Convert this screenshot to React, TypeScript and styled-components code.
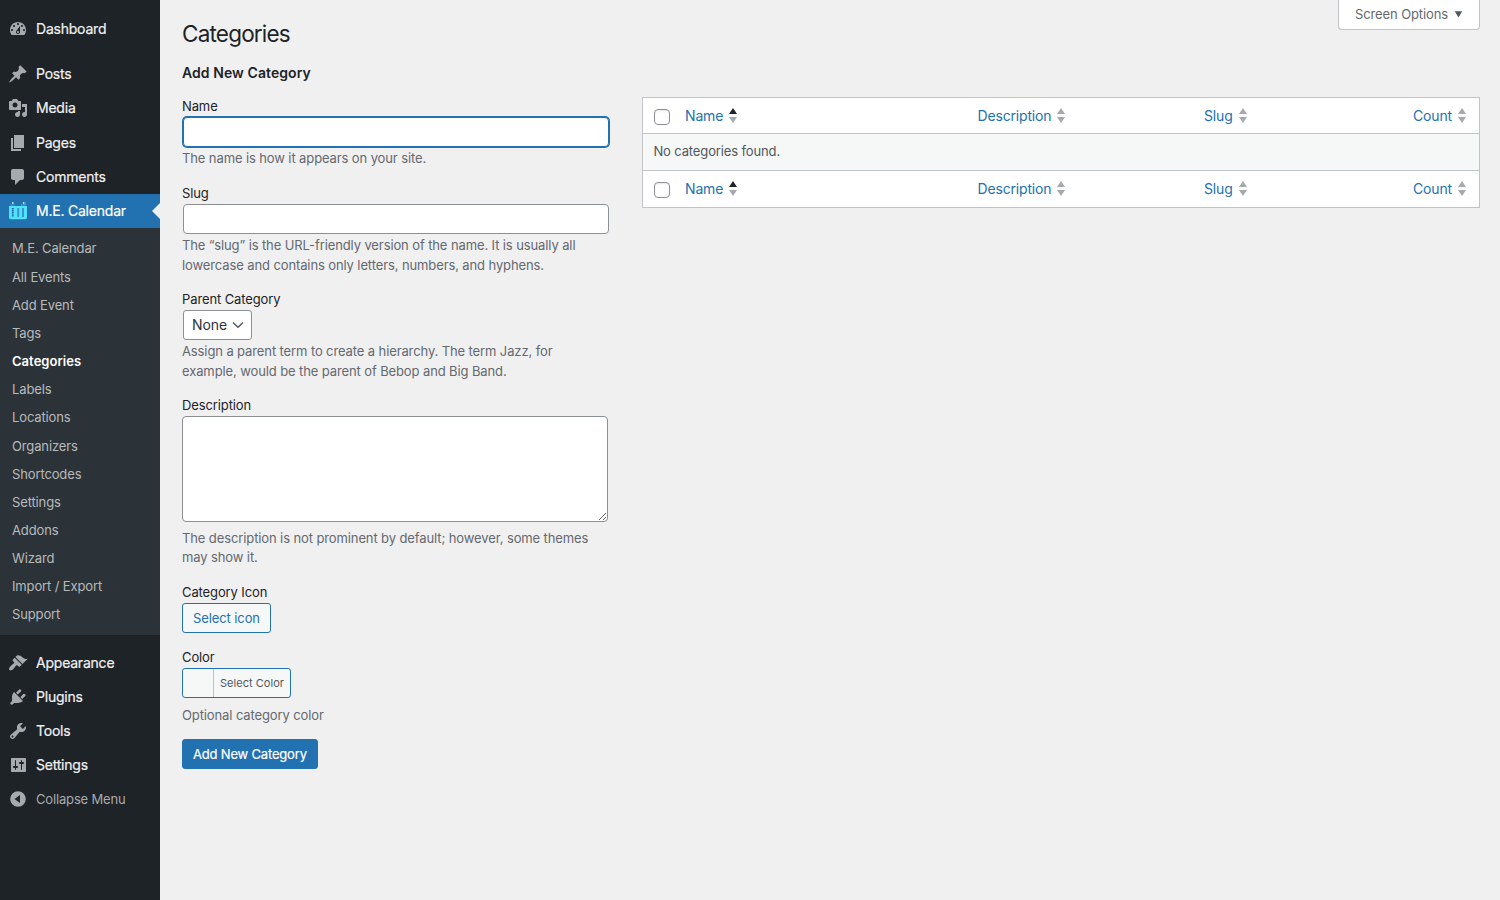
import React from "react";
import styled, { createGlobalStyle, css } from "styled-components";

const GlobalStyle = createGlobalStyle`
  * { box-sizing: border-box; }
  html, body { margin: 0; background: #f0f0f0; }
  body {
    font-family: Inter, "Liberation Sans", sans-serif;
    font-size: 13px;
    line-height: 19.5px;
    letter-spacing: -0.11px;
    color: #1d2327;
    overflow: hidden;
  }
  input, textarea, button, select { font-family: inherit; letter-spacing: inherit; margin: 0; outline: none; }
`;

const Page = styled.div`
  display: flex;
  width: 1500px;
  height: 900px;
`;

/* Sidebar */

const Sidebar = styled.nav`
  width: 160px;
  flex: none;
  background: #1d2327;
  padding-top: 12px;
`;

const MenuList = styled.ul<{ $gap?: number }>`
  list-style: none;
  margin: ${(p) => p.$gap ?? 0}px 0 0;
  padding: 0;
`;

const MenuRow = styled.li<{ $active?: boolean; $muted?: boolean }>`
  display: flex;
  align-items: center;
  height: 34.2px;
  padding-left: 8px;
  gap: 8px;
  font-size: 14px;
  line-height: 18px;
  letter-spacing: -0.22px;
  white-space: nowrap;
  color: #f0f0f1;
  -webkit-text-stroke: 0.2px currentColor;
  ${(p) =>
    p.$muted &&
    css`
      height: 34px;
      font-size: 13px;
      line-height: 19px;
      letter-spacing: -0.16px;
      color: #a7aaad;
      -webkit-text-stroke: 0;
    `}
  ${(p) =>
    p.$active &&
    css`
      background: #2271b1;
      color: #fff;
      &::after {
        content: "";
        margin-left: auto;
        border: 8px solid transparent;
        border-left-width: 0;
        border-right-color: #f0f0f0;
      }
    `}
`;

const MenuIcon = styled.svg`
  width: 20px;
  height: 20px;
  flex: none;
  fill: #a7aaad;
`;

const SubMenu = styled.ul`
  list-style: none;
  margin: 0;
  padding: 6.3px 0 6.3px;
  background: #2c3338;
`;

const SubItem = styled.li<{ $current?: boolean }>`
  height: 28.17px;
  line-height: 28.17px;
  padding-left: 12px;
  letter-spacing: ${(p) => (p.$current ? 0.04 : -0.13)}px;
  color: ${(p) => (p.$current ? "#fff" : "#b7babd")};
  font-weight: ${(p) => (p.$current ? 600 : 400)};
`;

/* Main area */

const Main = styled.main`
  flex: 1;
  display: flex;
  flex-direction: column;
  padding: 0 20px 0 22px;
`;

const TopBar = styled.header`
  display: flex;
  justify-content: space-between;
  align-items: flex-start;
  height: 63px;
`;

const Title = styled.h1`
  margin: 19px 0 0;
  font-size: 22.5px;
  line-height: 30px;
  font-weight: 400;
  letter-spacing: -0.8px;
`;

const ScreenOptions = styled.button`
  display: flex;
  align-items: center;
  gap: 6px;
  width: 142px;
  height: 30px;
  padding: 0 16px 1px;
  border: 1px solid #c3c4c7;
  border-top: 0;
  border-radius: 0 0 4px 4px;
  background: #fff;
  color: #646970;
  font-size: 13px;
  white-space: nowrap;
`;

const Columns = styled.div`
  display: flex;
  gap: 32px;
  align-items: flex-start;
`;

const FormColumn = styled.form`
  width: 428px;
  flex: none;
`;

const FormHeading = styled.h2`
  margin: 0 0 13.5px;
  font-size: 14px;
  line-height: 20px;
  font-weight: 600;
  letter-spacing: 0.07px;
`;

const Field = styled.div<{ $height: number }>`
  display: flex;
  flex-direction: column;
  align-items: flex-start;
  height: ${(p) => p.$height}px;
`;

const Label = styled.label`
  height: 20px;
  line-height: 18px;
`;

const Help = styled.p<{ $top?: number }>`
  margin: ${(p) => p.$top ?? 1}px 0 0;
  color: #646970;
  white-space: pre-line;
`;

const TextInput = styled.input<{ $focused?: boolean }>`
  width: 426px;
  height: 30px;
  margin: 0.5px 1px 0.5px;
  padding: 0 8px;
  border: 1px solid ${(p) => (p.$focused ? "#2271b1" : "#8c8f94")};
  border-radius: 4px;
  background: #fff;
  box-shadow: ${(p) => (p.$focused ? "0 0 0 1px #2271b1" : "none")};
`;

const SelectBox = styled.div`
  display: flex;
  align-items: center;
  justify-content: space-between;
  width: 69px;
  height: 30px;
  margin: 0.5px 1px;
  padding: 0 7px 0 8px;
  border: 1px solid #8c8f94;
  border-radius: 3px;
  background: #fff;
  color: #2c3338;
  font-size: 14px;
`;

const TextArea = styled.textarea`
  display: block;
  width: 426px;
  height: 106px;
  border: 1px solid #8c8f94;
  border-radius: 4px;
  background: #fff;
  resize: vertical;
`;

const Button = styled.button<{ $primary?: boolean }>`
  height: 30px;
  padding: 0 10px;
  border: 1px solid #2271b1;
  border-radius: 3px;
  background: ${(p) => (p.$primary ? "#2271b1" : "#f6f7f7")};
  color: ${(p) => (p.$primary ? "#fff" : "#2271b1")};
  font-size: 13px;
  letter-spacing: ${(p) => (p.$primary ? -0.18 : -0.1)}px;
  white-space: nowrap;
  -webkit-text-stroke: ${(p) => (p.$primary ? "0.2px #fff" : "0")};
`;

const ColorButton = styled.button`
  display: flex;
  width: 109px;
  height: 30px;
  padding: 0;
  border: 1px solid #2271b1;
  border-radius: 3px;
  background: #f6f7f7;
  overflow: hidden;
`;

const Swatch = styled.span`
  width: 30px;
  height: 28px;
  flex: none;
`;

const ColorText = styled.span`
  flex: 1;
  border-left: 1px solid #c3c4c7;
  color: #50575e;
  font-size: 11px;
  letter-spacing: 0.03px;
  line-height: 28px;
  text-align: center;
  white-space: nowrap;
`;

const Table = styled.section`
  flex: 1;
  margin-top: 34px;
  border: 1px solid #c3c4c7;
  background: #fff;
`;

const HeadRow = styled.div<{ $foot?: boolean }>`
  display: grid;
  grid-template-columns: 32px 292.5px 226.5px 209px 1fr;
  align-items: center;
  height: ${(p) => (p.$foot ? 36 : 35)}px;
  padding-left: 10px;
`;

const EmptyRow = styled.div`
  height: 38px;
  line-height: 35px;
  padding-left: 10.4px;
  border: 1px solid #c3c4c7;
  border-width: 1px 0;
  background: #f6f7f7;
  color: #50575e;
  letter-spacing: -0.13px;
`;

const Checkbox = styled.span<{ $foot?: boolean }>`
  display: block;
  width: 16px;
  height: 16px;
  margin: ${(p) => (p.$foot ? 2 : 3)}px 0 0 1px;
  border: 1px solid #8c8f94;
  border-radius: 4px;
  background: #fff;
  box-shadow: inset 0 1px 2px rgba(0, 0, 0, 0.1);
`;

const SortLink = styled.a`
  display: flex;
  align-items: center;
  gap: 6px;
  color: #2271b1;
  font-size: 14px;
  letter-spacing: -0.17px;
`;

const SortIcon = styled.svg<{ $foot?: boolean }>`
  margin-bottom: ${(p) => (p.$foot ? 2 : 0)}px;
`;

const ICONS = {
  dashboard:
    "M3.76 16h12.48c1.1-1.37 1.76-3.11 1.76-5 0-4.42-3.58-8-8-8s-8 3.58-8 8c0 1.89.66 3.63 1.76 5zM10 4c.55 0 1 .45 1 1s-.45 1-1 1-1-.45-1-1 .45-1 1-1zM6 6c.55 0 1 .45 1 1s-.45 1-1 1-1-.45-1-1 .45-1 1-1zm8 0c.55 0 1 .45 1 1s-.45 1-1 1-1-.45-1-1 .45-1 1-1zm-5.37 5.55L12 7v6c0 1.1-.9 2-2 2s-2-.9-2-2c0-.57.24-1.08.63-1.45zM4 10c.55 0 1 .45 1 1s-.45 1-1 1-1-.45-1-1 .45-1 1-1zm12 0c.55 0 1 .45 1 1s-.45 1-1 1-1-.45-1-1 .45-1 1-1zm-5 3c0-.55-.45-1-1-1s-1 .45-1 1 .45 1 1 1 1-.45 1-1z",
  posts:
    "M10.44 3.02l1.82-1.82 6.36 6.35-1.83 1.82c-1.05-.68-2.48-.57-3.41.36l-.75.75c-.92.93-1.04 2.35-.35 3.41l-1.83 1.82-2.41-2.41-2.8 2.79c-.42.42-3.38 2.71-3.8 2.29s1.86-3.39 2.28-3.81l2.79-2.79L4.1 9.36l1.83-1.82c1.05.69 2.48.57 3.4-.36l.75-.75c.93-.92 1.05-2.35.36-3.41z",
  media:
    "M13 11V4c0-.55-.45-1-1-1h-1.67L9 1H5L3.67 3H2c-.55 0-1 .45-1 1v7c0 .55.45 1 1 1h10c.55 0 1-.45 1-1zM7 4.5c1.38 0 2.5 1.12 2.5 2.5S8.38 9.5 7 9.5 4.5 8.38 4.5 7 5.62 4.5 7 4.5zM14 6h5v10.5c0 1.38-1.12 2.5-2.5 2.5S14 17.88 14 16.5s1.12-2.5 2.5-2.5c.17 0 .34.02.5.05V9h-3V6zm-4 8.05V13h2v3.5c0 1.38-1.12 2.5-2.5 2.5S7 17.88 7 16.5 8.12 14 9.5 14c.17 0 .34.02.5.05z",
  pages: "M6 15V2h10v13H6zm-1 1h8v2H3V5h2v11z",
  comments:
    "M5 2h9c1.1 0 2 .9 2 2v7c0 1.1-.9 2-2 2h-2l-5 5v-5H5c-1.1 0-2-.9-2-2V4c0-1.1.9-2 2-2z",
  appearance:
    "M14.48 11.06L7.41 3.99l1.5-1.5c.5-.56 2.3-.47 3.51.32 1.21.8 1.43 1.28 2.91 2.1 1.18.64 2.45 1.26 4.45.85zm-.71.71L6.7 4.7 4.93 6.47c-.39.39-.39 1.02 0 1.41l1.06 1.06c.39.39.39 1.03 0 1.42-.6.6-1.43 1.11-2.21 1.69-.35.26-.7.53-1.01.84C1.43 14.23.4 16.08 1.4 17.07c.99 1 2.84-.03 4.18-1.36.31-.31.58-.66.85-1.02.57-.78 1.08-1.61 1.69-2.21.39-.39 1.02-.39 1.41 0l1.06 1.06c.39.39 1.02.39 1.41 0z",
  plugins:
    "M13.11 4.36L9.87 7.6 8 5.73l3.24-3.24c.35-.34 1.05-.2 1.56.32.52.51.66 1.21.31 1.55zm-8 1.77l.91-1.12 9.01 9.01-1.19.84c-.71.71-2.63 1.16-3.82 1.16H6.14L4.9 17.26c-.59.59-1.54.59-2.12 0-.59-.58-.59-1.53 0-2.12l1.24-1.24v-3.88c0-1.13.4-3.19 1.09-3.89zm7.26 3.97l3.24-3.24c.34-.35 1.04-.21 1.55.31.52.51.66 1.21.31 1.55l-3.24 3.25z",
  tools:
    "M16.68 9.77c-1.34 1.34-3.3 1.67-4.95.99l-5.41 6.52c-.99.99-2.59.99-3.58 0s-.99-2.59 0-3.57l6.52-5.42c-.68-1.65-.35-3.61.99-4.95 1.28-1.28 3.12-1.62 4.72-1.06l-2.89 2.89 2.82 2.82 2.86-2.87c.53 1.58.18 3.39-1.08 4.65zM3.81 16.21c.4.39 1.04.39 1.43 0 .4-.4.4-1.04 0-1.43-.39-.4-1.03-.4-1.43 0-.39.39-.39 1.03 0 1.43z",
  settings:
    "M18 16V4c0-.55-.45-1-1-1H4c-.55 0-1 .45-1 1v12c0 .55.45 1 1 1h13c.55 0 1-.45 1-1zM8 11h1c.55 0 1 .45 1 1s-.45 1-1 1H8v1.5c0 .28-.22.5-.5.5s-.5-.22-.5-.5V13H6c-.55 0-1-.45-1-1s.45-1 1-1h1V5.5c0-.28.22-.5.5-.5s.5.22.5.5V11zm5-2h-1c-.55 0-1-.45-1-1s.45-1 1-1h1V5.5c0-.28.22-.5.5-.5s.5.22.5.5V7h1c.55 0 1 .45 1 1s-.45 1-1 1h-1v5.5c0 .28-.22.5-.5.5s-.5-.22-.5-.5V9z",
  collapse:
    "M10 2.2a7.8 7.8 0 1 0 0 15.6a7.8 7.8 0 0 0 0-15.6zM12 6v8L6.5 10z",
};

type IconName = keyof typeof ICONS;

const Item = ({ icon, label, muted }: { icon: IconName; label: string; muted?: boolean }) => (
  <MenuRow $muted={muted}>
    <MenuIcon viewBox="0 0 20 20">
      <path d={ICONS[icon]} fillRule={icon === "collapse" ? "evenodd" : "nonzero"} />
    </MenuIcon>
    {label}
  </MenuRow>
);

const CalendarIcon = () => (
  <MenuIcon viewBox="0 0 20 20">
    <path d="M1 5h18V16.500q0 1.700-1.700 1.700H2.700q-1.700 0-1.700-1.700z" fill="#4fe3fb" />
    <path d="M4.800 7v9" stroke="#1f66a6" strokeWidth="1.800" strokeDasharray="1.300 .5" />
    <path d="M10.200 7v9M15 7v9" stroke="#3a93cc" strokeWidth="2" />
    <path d="M4 1.200h1.600v1.600H4zM14.800 1.200h1.600v1.600h-1.600z" fill="#e6f8ff" />
    <path d="M2.800 4h3.800M13 4h4.500M17.300 1.500v2" stroke="#8fc9ee" strokeWidth=".9" strokeDasharray="1 .7" />
  </MenuIcon>
);

const SortArrows = ({ asc, foot }: { asc?: boolean; foot?: boolean }) => (
  <SortIcon $foot={foot} width="8" height="15" viewBox="0 0 8 15">
    <path d="M4 0l4 6H0z" fill={asc ? "#1d2327" : "#a7aaad"} />
    <path d="M4 15l4-6H0z" fill="#a7aaad" />
  </SortIcon>
);

const HeaderCells = ({ foot }: { foot?: boolean }) => (
  <HeadRow $foot={foot}>
    <Checkbox $foot={foot} />
    {["Name", "Description", "Slug", "Count"].map((name) => (
      <SortLink key={name}>
        {name}
        <SortArrows asc={name === "Name"} foot={foot} />
      </SortLink>
    ))}
  </HeadRow>
);

const SUB_ITEMS = [
  "M.E. Calendar", "All Events", "Add Event", "Tags", "Categories", "Labels", "Locations",
  "Organizers", "Shortcodes", "Settings", "Addons", "Wizard", "Import / Export", "Support",
];

export default function App() {
  return (
    <Page>
      <GlobalStyle />
      <Sidebar>
        <MenuList>
          <Item icon="dashboard" label="Dashboard" />
        </MenuList>
        <MenuList $gap={11}>
          <Item icon="posts" label="Posts" />
          <Item icon="media" label="Media" />
          <Item icon="pages" label="Pages" />
          <Item icon="comments" label="Comments" />
          <MenuRow $active>
            <CalendarIcon />
            M.E. Calendar
          </MenuRow>
        </MenuList>
        <SubMenu>
          {SUB_ITEMS.map((name) => (
            <SubItem key={name} $current={name === "Categories"}>
              {name}
            </SubItem>
          ))}
        </SubMenu>
        <MenuList $gap={10.8}>
          <Item icon="appearance" label="Appearance" />
          <Item icon="plugins" label="Plugins" />
          <Item icon="tools" label="Tools" />
          <Item icon="settings" label="Settings" />
          <Item icon="collapse" label="Collapse Menu" muted />
        </MenuList>
      </Sidebar>
      <Main>
        <TopBar>
          <Title>Categories</Title>
          <ScreenOptions>
            Screen Options
            <svg width="10" height="8" viewBox="0 0 10 8">
              <path d="M.8 1h8.400L5 7.800z" fill="#50575e" />
            </svg>
          </ScreenOptions>
        </TopBar>
        <Columns>
          <FormColumn>
            <FormHeading>Add New Category</FormHeading>
            <Field $height={87}>
              <Label>Name</Label>
              <TextInput $focused />
              <Help>The name is how it appears on your site.</Help>
            </Field>
            <Field $height={106}>
              <Label>Slug</Label>
              <TextInput />
              <Help $top={1.5}>
                {"The “slug” is the URL-friendly version of the name. It is usually all\nlowercase and contains only letters, numbers, and hyphens."}
              </Help>
            </Field>
            <Field $height={106.5}>
              <Label>Parent Category</Label>
              <SelectBox>
                None
                <svg width="12" height="8" viewBox="0 0 12 8">
                  <path d="M1 1.500L6 6.300l5-4.800" fill="none" stroke="#50575e" strokeWidth="1.400" />
                </svg>
              </SelectBox>
              <Help $top={1.5}>
                {"Assign a parent term to create a hierarchy. The term Jazz, for\nexample, would be the parent of Bebop and Big Band."}
              </Help>
            </Field>
            <Field $height={187}>
              <Label>Description</Label>
              <TextArea />
              <Help $top={6.5}>
                {"The description is not prominent by default; however, some themes\nmay show it."}
              </Help>
            </Field>
            <Field $height={65}>
              <Label>Category Icon</Label>
              <Button type="button">Select icon</Button>
            </Field>
            <Field $height={91}>
              <Label>Color</Label>
              <ColorButton type="button">
                <Swatch />
                <ColorText>Select Color</ColorText>
              </ColorButton>
              <Help $top={8}>Optional category color</Help>
            </Field>
            <Button type="button" $primary>
              Add New Category
            </Button>
          </FormColumn>
          <Table>
            <HeaderCells />
            <EmptyRow>No categories found.</EmptyRow>
            <HeaderCells foot />
          </Table>
        </Columns>
      </Main>
    </Page>
  );
}
